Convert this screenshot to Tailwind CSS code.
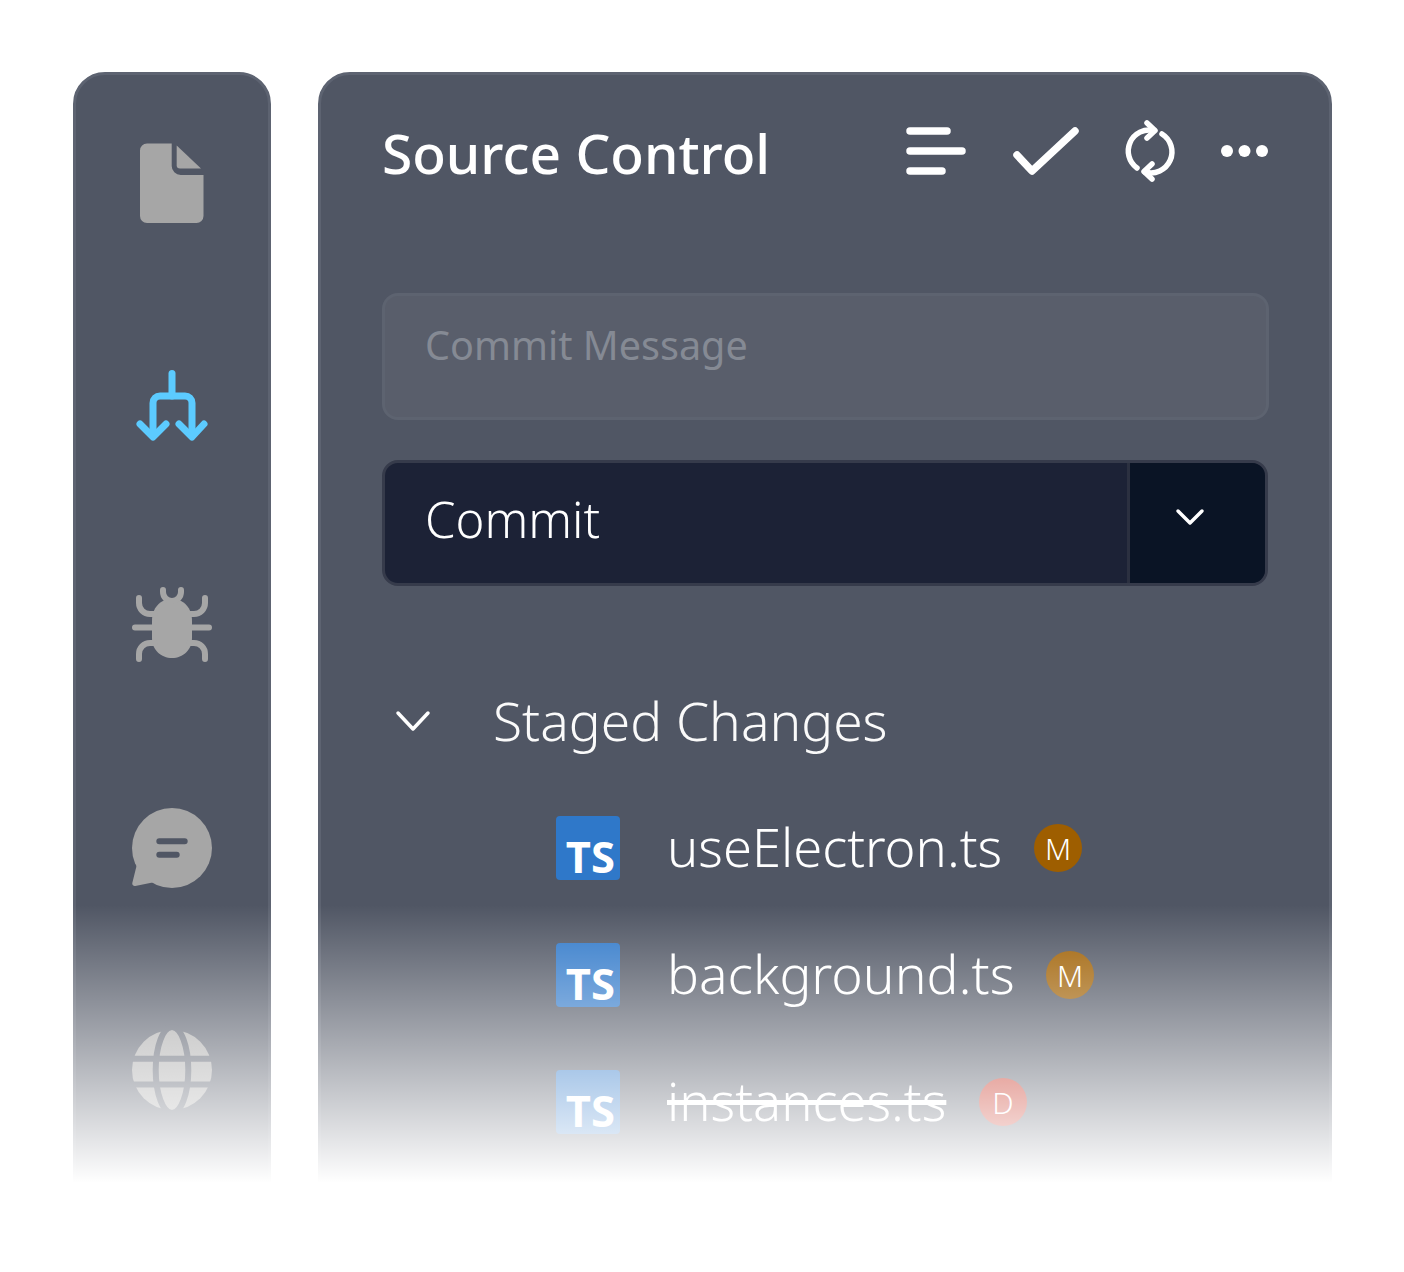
<!DOCTYPE html>
<html lang="en">
<head>
    <meta charset="UTF-8">
    <title>Source Control</title>
    <script src="https://cdn.jsdelivr.net/npm/@tailwindcss/browser@4"></script>
</head>
<body class="bg-white m-0 overflow-hidden font-['Noto_Sans',sans-serif]">
    <div class="relative w-[1404px] h-[1272px] pt-[72px] pl-[73px] flex gap-[47px]">

        <!-- Activity bar -->
        <aside class="w-[198px] h-[1110px] bg-[#505664] border-[3px] border-[#5d6371] rounded-t-[32px] flex flex-col items-center pt-[68px] gap-[142px] overflow-hidden">
            <svg class="w-[80px] h-[80px] shrink-0" viewBox="132 143 80 80" fill="#a6a6a6">
                <path d="M147 143.500H171.700V166a9 9 0 0 0 9 9H203.500V216a7 7 0 0 1-7 7H147a7 7 0 0 1-7-7V150.500a7 7 0 0 1 7-7z"/>
                <path d="M176.700 145.500L201 168.500H180a3.300 3.300 0 0 1-3.300-3.300z"/>
            </svg>
            <svg class="w-[80px] h-[80px] shrink-0" viewBox="132 365 80 80" fill="none" stroke="#5ccbff" stroke-width="7" stroke-linecap="round" stroke-linejoin="round">
                <path d="M172 373.500V396"/>
                <path d="M153 436V403a7 7 0 0 1 7-7H185a7 7 0 0 1 7 7V436"/>
                <path d="M140 424L153 437L166 424"/>
                <path d="M179 424L192 437L204 424"/>
            </svg>
            <svg class="w-[80px] h-[80px] shrink-0" viewBox="132 587 80 80" fill="none" stroke="#a6a6a6" stroke-width="6" stroke-linecap="round">
                <path d="M152 621c0-13 8-22 20-22s20 9 20 22v17c0 12-9 20-20 20s-20-8-20-20z" fill="#a6a6a6" stroke="none"/>
                <path d="M163 590v2a9 9 0 0 0 18 0v-2"/>
                <path d="M139 598v5a11 11 0 0 0 11 11h5"/>
                <path d="M205 598v5a11 11 0 0 1-11 11h-5"/>
                <path d="M135 627.500H209"/>
                <path d="M139 659v-5a11 11 0 0 1 11-11h5"/>
                <path d="M205 659v-5a11 11 0 0 0-11-11h-5"/>
            </svg>
            <svg class="w-[80px] h-[80px] shrink-0 overflow-visible" viewBox="132 809 80 80">
                <circle cx="172" cy="848" r="40" fill="#a6a6a6"/>
                <path fill="#a6a6a6" d="M137 864L132.300 883a2.500 2.500 0 0 0 3 3L155 882z"/>
                <path fill="none" stroke="#505664" stroke-width="6" stroke-linecap="round" d="M159.300 841.300H184.700M159.300 854.700H176.700"/>
            </svg>
            <svg class="w-[80px] h-[80px] shrink-0 overflow-visible" viewBox="132 1031 80 80">
                <circle cx="172" cy="1070" r="40" fill="#a6a6a6"/>
                <g fill="none" stroke="#505664" stroke-width="6">
                    <ellipse cx="172" cy="1070" rx="16.300" ry="43"/>
                    <path d="M132 1058.800H212M132 1084.500H212"/>
                </g>
            </svg>
        </aside>

        <!-- Source control panel -->
        <section class="w-[1014px] h-[1110px] bg-[#505664] border-[3px] border-[#5d6371] rounded-t-[32px] pl-[61px] pr-[60px] pt-[40px] overflow-hidden">
            <header class="h-[72px] flex items-center">
                <h1 class="text-[55px] font-medium text-white leading-none mt-[2px] whitespace-nowrap">Source Control</h1>
                <div class="ml-auto flex items-center gap-[40px]">
                    <svg class="w-[68px] h-[72px]" viewBox="902 115 68 72" fill="none" stroke="#fff" stroke-width="7.500" stroke-linecap="round">
                        <path d="M910 131H947M910 151H962M910 171H942"/>
                    </svg>
                    <svg class="w-[70px] h-[72px]" viewBox="1010 115 70 72" fill="none" stroke="#fff" stroke-width="7.500" stroke-linecap="round" stroke-linejoin="round">
                        <path d="M1017 155L1032 171L1075 131"/>
                    </svg>
                    <svg class="w-[58px] h-[72px]" viewBox="1120 115 58 72" fill="none" stroke="#fff" stroke-width="5.500" stroke-linecap="round" stroke-linejoin="round">
                        <path d="M1137 168A21 21 0 0 1 1154 130.500"/>
                        <path d="M1147 123L1155 130.500L1147 138"/>
                        <path d="M1162 134A21 21 0 0 1 1145 172"/>
                        <path d="M1152 164L1144 171.500L1152 179"/>
                    </svg>
                    <svg class="w-[50px] h-[72px] ml-px" viewBox="1219 115 50 72" fill="#fff">
                        <circle cx="1227" cy="151" r="6"/><circle cx="1244.500" cy="151" r="6"/><circle cx="1262" cy="151" r="6"/>
                    </svg>
                </div>
            </header>

            <div class="mt-[106px] h-[127px] bg-[#595e6b] border-[3px] border-[#5d6370] rounded-[16px] pl-[40px] pt-[22px] text-[39.600px] leading-[54px] text-[#858a94]">Commit Message</div>

            <div class="mt-[40px] h-[126px] w-[886px] flex bg-[#1c2236] border-[3px] border-[#363b4b] rounded-[16px] overflow-hidden">
                <div class="flex-1 pl-[40px] pt-[22px] text-[49px] font-light leading-[68px] text-white">Commit</div>
                <div class="w-[138px] flex items-center justify-center bg-[#0a1425] border-l-[3px] border-[#2b3040]">
                    <svg class="w-[32px] h-[20px] -mt-[10px] mr-[16px]" viewBox="0 0 32 20" fill="none" stroke="#fff" stroke-width="3.500" stroke-linecap="round" stroke-linejoin="round">
                        <path d="M4 3L16 15L28 3"/>
                    </svg>
                </div>
            </div>

            <div class="mt-[99px] h-[72px] flex items-center">
                <svg class="w-[36px] h-[24px] ml-[13px] mt-[2px]" viewBox="0 0 36 24" fill="none" stroke="#fff" stroke-width="3.500" stroke-linecap="round" stroke-linejoin="round">
                    <path d="M3 3L18 19L33 3"/>
                </svg>
                <span class="ml-[62px] text-[53.300px] font-light text-[#fafafa] whitespace-nowrap">Staged Changes</span>
            </div>

            <ul class="mt-[59px] pl-[174px] flex flex-col gap-[63px]">
                <li class="h-[64px] flex items-center">
                    <span class="w-[64px] h-[64px] shrink-0 bg-[#2f78c9] rounded-[4px] flex items-end justify-end pr-[5px] text-[43.500px] leading-[46px] font-bold font-['Open_Sans',sans-serif] text-white">TS</span>
                    <span class="ml-[47px] w-[335px] shrink-0 pb-[2px] text-[52.500px] font-light text-white whitespace-nowrap">useElectron.ts</span>
                    <span class="ml-[32px] w-[48px] h-[48px] rounded-full bg-[#9e5e00] flex items-center justify-center text-[30px] font-light text-white">M</span>
                </li>
                <li class="h-[64px] flex items-center">
                    <span class="w-[64px] h-[64px] shrink-0 bg-[#2f78c9] rounded-[4px] flex items-end justify-end pr-[5px] text-[43.500px] leading-[46px] font-bold font-['Open_Sans',sans-serif] text-white">TS</span>
                    <span class="ml-[47px] w-[347px] shrink-0 pb-[2px] text-[53.400px] font-light text-white whitespace-nowrap">background.ts</span>
                    <span class="ml-[32px] w-[48px] h-[48px] rounded-full bg-[#9e5e00] flex items-center justify-center text-[30px] font-light text-white">M</span>
                </li>
                <li class="h-[64px] flex items-center">
                    <span class="w-[64px] h-[64px] shrink-0 bg-[#2f78c9] rounded-[4px] flex items-end justify-end pr-[5px] text-[43.500px] leading-[46px] font-bold font-['Open_Sans',sans-serif] text-white">TS</span>
                    <span class="ml-[47px] w-[280px] shrink-0 pb-[2px] text-[52.500px] font-light text-white whitespace-nowrap line-through">instances.ts</span>
                    <span class="ml-[32px] w-[48px] h-[48px] rounded-full bg-[#c2200f] flex items-center justify-center text-[30px] font-light text-white">D</span>
                </li>
            </ul>
        </section>

        <!-- Fade to white over the bottom of both panels -->
        <div class="absolute left-0 right-0 top-[905px] h-[278px] bg-gradient-to-b from-white/0 to-white"></div>
    </div>
</body>
</html>
